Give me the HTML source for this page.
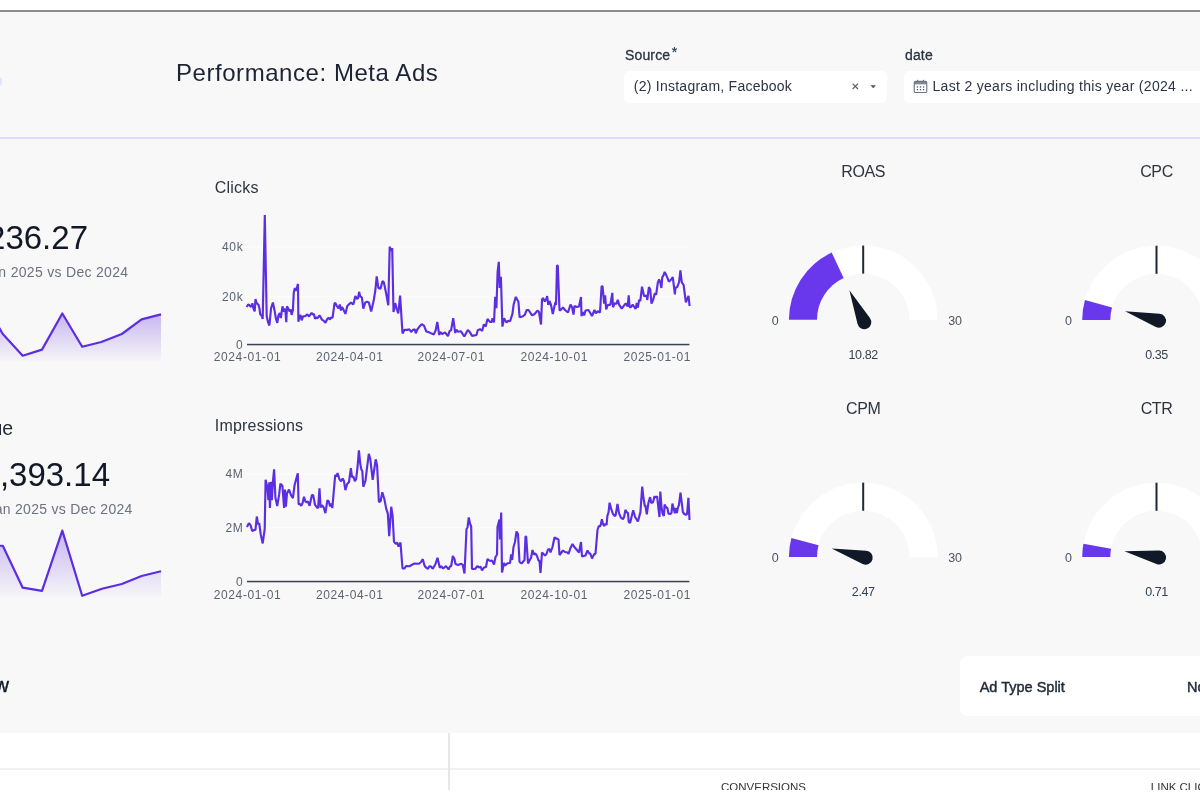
<!DOCTYPE html>
<html><head><meta charset="utf-8"><title>Performance: Meta Ads</title>
<style>
*{box-sizing:border-box;margin:0;padding:0}
html,body{width:1200px;height:800px;overflow:hidden;background:#ffffff;font-family:"Liberation Sans",sans-serif}
.topbar{position:absolute;left:0;top:10px;width:1200px;height:1.6px;background:#8b8d8d}
.page{position:absolute;left:0;top:11.6px;width:1200px;height:721.7px;background:#f8f8f8}
.hdrline{position:absolute;left:0;top:137.2px;width:1200px;height:1.5px;background:#e0dbfb}
.root{position:absolute;left:0;top:0;width:1200px;height:800px;overflow:hidden;will-change:transform}
.abs{position:absolute;white-space:nowrap}
.title{left:176px;font-size:24px;line-height:24px;color:#1c2434;letter-spacing:0.55px}
.flabel{font-size:14px;line-height:14px;color:#2b3344;-webkit-text-stroke:0.3px #2b3344;letter-spacing:0.15px}
.input{position:absolute;background:#fff;border-radius:5px;height:31.3px;top:71.3px}
.itext{font-size:14px;line-height:14px;color:#2b3344;letter-spacing:0.25px}
.logo{position:absolute;left:-6px;top:77px;width:8px;height:9px;border-radius:4px;background:#d9e6fb}
.kpi-val{font-size:33px;line-height:33px;color:#111827}
.kpi-sub{font-size:14px;line-height:14px;color:#6b7280;letter-spacing:0.3px}
.kpi-lab{font-size:19.5px;line-height:20px;color:#1f2937}
.ctitle{font-size:16px;line-height:16px;color:#2e3440;letter-spacing:0.2px}
svg{position:absolute;left:0;top:0}
svg text{font-family:"Liberation Sans",sans-serif}
.ax{font-size:12px;fill:#5c6370;letter-spacing:0.62px}
.gt{font-size:16px;fill:#2e3440;letter-spacing:-0.4px}
.gl{font-size:12.5px;fill:#4b5563}
.gv{font-size:12.5px;fill:#374151;letter-spacing:-0.4px}
.bottom{position:absolute;left:0;top:733.3px;width:1200px;height:56.4px;background:#fff;overflow:hidden}
.hline{position:absolute;left:0;top:35px;width:1200px;height:1.6px;background:#f1f1f1}
.vline{position:absolute;left:448px;top:0;width:2px;height:56.4px;background:#e5e7eb}
.th{font-size:11.5px;line-height:12px;color:#333;letter-spacing:0px}
.card{position:absolute;left:960px;top:656.3px;width:260px;height:60px;background:#fff;border-radius:8px}
.cardt{font-size:14.5px;line-height:15px;color:#1f2937;-webkit-text-stroke:0.45px #1f2937}
.sect{font-size:20px;line-height:20px;color:#111827;-webkit-text-stroke:0.4px #111827}
</style></head><body>
<div class="root">
<div class="topbar"></div>
<div class="page"></div>
<div class="hdrline"></div>
<div class="logo"></div>
<div class="abs title" style="top:60.5px">Performance: Meta Ads</div>
<div class="abs flabel" style="left:625px;top:47.9px">Source<span style="font-size:14px;position:relative;top:-3px;margin-left:1.5px;-webkit-text-stroke:0.2px #2b3344">*</span></div>
<div class="input" style="left:624px;width:263px">
  <div class="abs itext" style="left:9.8px;top:7.7px">(2) Instagram, Facebook</div>
  <svg width="8" height="8" style="left:227.6px;top:12.2px" viewBox="0 0 8 8"><path d="M0.6,0.6 L6.0,6.0 M6.0,0.6 L0.6,6.0" stroke="#525a66" stroke-width="1.1" fill="none"/></svg>
  <svg width="8" height="5" style="left:245.9px;top:13.6px" viewBox="0 0 8 5"><path d="M0.4,0.2 L6.0,0.2 L3.2,3.2 Z" fill="#4b5563"/></svg>
</div>
<div class="abs flabel" style="left:905px;top:47.9px">date</div>
<div class="input" style="left:904px;width:320px">
  <svg width="16" height="16" style="left:9px;top:8px" viewBox="0 0 16 16"><rect x="1.25" y="2.35" width="12.5" height="11.2" rx="1.4" fill="none" stroke="#6b7280" stroke-width="1.1"/><rect x="1.25" y="2.35" width="12.5" height="3" fill="#6b7280" opacity="0.85"/><rect x="4.1" y="0.8" width="1.1" height="2.2" fill="#6b7280"/><rect x="9.9" y="0.8" width="1.1" height="2.2" fill="#6b7280"/><g fill="#4b5563"><rect x="3.8" y="7.3" width="1.3" height="1.3"/><rect x="6.85" y="7.3" width="1.3" height="1.3"/><rect x="9.9" y="7.3" width="1.3" height="1.3"/><rect x="3.8" y="10" width="1.3" height="1.3"/><rect x="6.85" y="10" width="1.3" height="1.3"/><rect x="9.9" y="10" width="1.3" height="1.3"/></g></svg>
  <div class="abs itext" style="left:28.5px;top:7.7px;letter-spacing:0.31px">Last 2 years including this year (2024 ...</div>
</div>
<!-- KPI text -->
<div class="abs kpi-val" style="right:1112px;top:221.2px">$1,236.27</div>
<div class="abs kpi-sub" style="right:1071.7px;top:264.5px">Jan 2025 vs Dec 2024</div>
<div class="abs kpi-lab" style="right:1186.9px;top:418px">Revenue</div>
<div class="abs kpi-val" style="right:1090px;top:457.8px">$13,393.14</div>
<div class="abs kpi-sub" style="right:1067.3px;top:502.3px">Jan 2025 vs Dec 2024</div>
<div class="abs ctitle" style="left:214.8px;top:179.5px">Clicks</div>
<div class="abs ctitle" style="left:214.8px;top:417.5px">Impressions</div>
<svg width="1200" height="800" viewBox="0 0 1200 800">
<defs>
<linearGradient id="sg1" x1="0" y1="313" x2="0" y2="361" gradientUnits="userSpaceOnUse"><stop offset="0" stop-color="#c7b5f0"/><stop offset="1" stop-color="#c7b5f0" stop-opacity="0.05"/></linearGradient>
<linearGradient id="sg2" x1="0" y1="530" x2="0" y2="597" gradientUnits="userSpaceOnUse"><stop offset="0" stop-color="#c7b5f0"/><stop offset="1" stop-color="#c7b5f0" stop-opacity="0.05"/></linearGradient>
</defs>
<path d="M-17.1,300.0 L2.8,334.0 L22.7,355.7 L42.0,349.6 L62.3,313.5 L82.2,346.7 L101.3,342.0 L121.8,334.0 L141.6,319.4 L161.0,314.4 L161.0,361 L-17.1,361 Z" fill="url(#sg1)"/><path d="M-17.1,300.0 L2.8,334.0 L22.7,355.7 L42.0,349.6 L62.3,313.5 L82.2,346.7 L101.3,342.0 L121.8,334.0 L141.6,319.4 L161.0,314.4" fill="none" stroke="#5b2ee2" stroke-width="2.2" stroke-linejoin="round"/>
<path d="M-17.1,545.5 L2.8,545.8 L22.7,587.7 L42.0,590.8 L62.3,530.6 L82.2,595.8 L102.0,588.7 L121.8,584.0 L141.6,576.0 L161.0,571.3 L161.0,597 L-17.1,597 Z" fill="url(#sg2)"/><path d="M-17.1,545.5 L2.8,545.8 L22.7,587.7 L42.0,590.8 L62.3,530.6 L82.2,595.8 L102.0,588.7 L121.8,584.0 L141.6,576.0 L161.0,571.3" fill="none" stroke="#5b2ee2" stroke-width="2.2" stroke-linejoin="round"/>
<g class="grid"><rect x="247" y="246.2" width="442.4" height="1" fill="#fdfdfd"/><rect x="247" y="296.2" width="442.4" height="1" fill="#fdfdfd"/></g>
<rect x="247" y="343.8" width="442.4" height="1.5" fill="#374151"/>
<path d="M246.7,307.0 L248.1,304.6 L249.2,304.9 L250.5,306.6 L251.6,306.3 L252.4,303.2 L253.3,308.0 L254.7,311.4 L255.5,299.1 L256.4,302.5 L257.4,303.9 L258.4,304.6 L259.5,308.7 L260.2,314.2 L261.5,315.5 L262.7,319.0 L264.8,214.9 L266.7,316.2 L268.1,322.4 L269.4,325.5 L271.1,308.0 L272.9,302.5 L274.6,310.7 L276.0,319.0 L277.3,322.8 L278.4,315.5 L279.7,313.1 L280.8,318.0 L282.5,306.3 L283.7,311.4 L285.2,308.7 L286.3,322.1 L287.0,306.3 L288.7,309.4 L289.7,311.4 L290.7,309.4 L291.6,314.9 L292.9,310.1 L293.8,292.2 L294.9,288.1 L295.7,290.8 L296.8,288.1 L298.0,283.9 L298.4,321.7 L299.5,315.5 L300.7,315.5 L301.6,320.4 L303.2,316.2 L305.3,316.1 L307.4,314.3 L309.0,316.5 L311.6,312.8 L312.8,314.6 L313.9,313.9 L315.0,318.8 L316.1,317.3 L317.3,318.4 L319.5,315.4 L322.1,319.9 L323.6,320.6 L325.4,322.9 L327.0,319.5 L328.5,317.6 L330.0,319.5 L330.8,317.6 L332.6,317.6 L334.5,303.4 L335.3,303.0 L336.8,306.0 L338.4,308.3 L339.8,304.5 L340.9,310.5 L341.6,307.1 L342.8,308.3 L345.4,313.9 L347.3,306.0 L349.5,303.8 L351.0,302.6 L353.3,304.5 L355.4,295.9 L357.0,298.9 L358.1,298.1 L359.1,291.8 L360.2,296.2 L361.9,297.6 L363.3,308.6 L365.3,302.4 L367.1,301.7 L368.8,302.4 L371.2,311.4 L373.6,301.1 L375.4,290.0 L376.7,276.3 L378.4,288.0 L380.5,288.7 L382.5,281.1 L383.9,282.5 L386.0,292.8 L388.3,305.2 L389.7,246.7 L391.1,250.8 L392.2,248.1 L393.5,312.1 L395.2,303.1 L396.6,308.6 L398.3,313.4 L400.1,295.5 L402.5,333.4 L404.5,329.9 L407.3,329.9 L409.4,329.3 L411.1,332.0 L412.9,330.0 L414.7,329.2 L415.8,333.3 L417.3,329.5 L419.3,326.8 L421.7,324.2 L424.0,325.7 L426.3,331.5 L428.7,332.1 L431.0,333.3 L433.9,334.4 L435.7,330.3 L437.3,321.9 L439.2,335.0 L440.3,331.8 L442.1,334.1 L445.0,332.4 L447.9,336.2 L449.7,330.9 L451.1,330.3 L453.2,318.1 L455.2,333.0 L456.4,329.5 L457.8,331.8 L460.8,331.2 L464.3,336.5 L467.8,330.0 L469.8,332.1 L472.1,335.9 L476.5,335.0 L477.7,330.3 L480.0,329.2 L482.2,330.8 L483.9,324.3 L485.7,326.6 L487.5,318.9 L489.9,321.9 L491.7,321.9 L492.5,318.3 L494.0,322.5 L495.2,296.9 L496.4,308.2 L497.6,272.0 L498.8,261.9 L499.7,288.0 L500.9,276.7 L502.4,326.6 L504.1,318.3 L506.5,322.5 L508.3,320.7 L510.1,321.3 L512.5,313.6 L513.6,304.7 L515.8,296.9 L518.4,301.7 L519.6,317.1 L522.6,316.5 L524.9,314.7 L526.7,310.0 L528.5,310.0 L532.1,315.3 L534.4,314.2 L537.4,310.6 L539.0,312.0 L541.0,324.5 L542.0,299.5 L543.0,298.0 L544.8,301.5 L546.0,299.5 L547.2,296.0 L548.2,305.0 L549.5,301.0 L551.0,305.0 L552.8,314.0 L554.5,306.0 L555.5,302.0 L556.0,305.0 L557.0,265.5 L557.8,265.5 L559.5,310.5 L561.0,309.5 L563.0,307.5 L565.0,310.0 L568.0,312.5 L570.5,304.5 L572.0,307.0 L573.5,314.5 L574.5,306.0 L577.0,307.0 L579.0,306.5 L581.0,297.0 L581.5,316.0 L583.0,312.0 L584.2,315.5 L585.5,310.5 L588.5,310.0 L592.0,316.0 L594.5,310.0 L595.9,313.4 L597.7,311.2 L600.0,312.5 L601.6,286.2 L602.5,286.2 L604.2,303.7 L605.1,295.4 L606.2,309.4 L607.6,305.1 L610.4,304.6 L612.3,292.8 L613.0,307.2 L614.7,303.3 L616.5,303.7 L617.8,299.8 L619.1,304.6 L621.7,308.6 L625.7,303.3 L627.7,306.4 L628.7,295.4 L629.6,307.2 L630.9,307.2 L632.7,304.6 L635.6,309.0 L636.8,302.9 L637.9,307.7 L639.1,299.8 L640.3,301.1 L642.0,286.7 L644.1,296.3 L646.7,295.4 L647.3,300.2 L648.9,287.1 L650.2,289.3 L651.5,303.7 L653.3,299.3 L654.8,293.3 L656.1,294.8 L657.8,282.8 L659.1,279.4 L660.4,282.8 L661.4,288.0 L662.3,277.1 L663.4,275.6 L664.7,271.9 L666.8,276.4 L668.9,281.6 L670.9,279.8 L672.8,277.1 L674.9,294.4 L675.4,288.0 L677.3,286.9 L679.1,282.0 L680.4,270.4 L681.8,282.4 L683.6,285.0 L685.9,302.3 L688.5,295.9 L689.6,306.0" fill="none" stroke="#5b2ee2" stroke-width="2.15" stroke-linejoin="bevel"/>
<text x="243.3" y="251.2" class="ax" text-anchor="end">40k</text>
<text x="243.3" y="301.2" class="ax" text-anchor="end">20k</text>
<text x="243.3" y="348.7" class="ax" text-anchor="end">0</text>
<text x="247.5" y="361.4" class="ax" text-anchor="middle">2024-01-01</text>
<text x="349.7" y="361.4" class="ax" text-anchor="middle">2024-04-01</text>
<text x="451.3" y="361.4" class="ax" text-anchor="middle">2024-07-01</text>
<text x="554.2" y="361.4" class="ax" text-anchor="middle">2024-10-01</text>
<text x="657.2" y="361.4" class="ax" text-anchor="middle">2025-01-01</text>
<g class="grid"><rect x="247" y="473.7" width="442.4" height="1" fill="#fdfdfd"/><rect x="247" y="527.2" width="442.4" height="1" fill="#fdfdfd"/></g>
<rect x="247" y="580.8" width="442.4" height="1.5" fill="#374151"/>
<path d="M247.0,527.0 L248.9,523.1 L250.5,525.0 L252.2,531.0 L254.2,530.0 L255.5,529.6 L256.8,516.5 L258.1,524.4 L259.2,523.1 L260.7,534.2 L262.7,543.4 L264.7,529.0 L265.6,479.8 L267.3,487.0 L268.4,500.1 L269.3,482.4 L269.9,508.0 L271.0,481.7 L271.9,500.1 L272.8,483.1 L274.1,469.3 L275.4,497.5 L277.2,506.0 L279.1,494.9 L280.4,483.7 L282.4,485.7 L284.1,508.0 L285.0,489.6 L285.9,506.7 L287.0,493.6 L289.0,489.6 L290.9,494.9 L292.9,498.1 L294.6,485.0 L296.2,479.1 L297.8,473.2 L298.6,504.1 L300.1,504.1 L301.2,505.8 L302.6,503.0 L304.0,496.8 L305.3,501.3 L306.8,502.4 L307.9,501.3 L309.6,505.8 L311.9,495.1 L313.2,495.1 L315.0,504.7 L316.9,507.5 L318.1,508.1 L319.5,488.4 L320.6,507.5 L322.0,505.2 L323.7,507.5 L325.4,513.1 L327.4,500.2 L328.7,501.3 L330.1,506.4 L331.2,503.6 L332.3,508.1 L335.2,475.1 L336.6,476.5 L337.6,473.0 L339.4,479.2 L341.0,481.3 L342.7,478.5 L344.0,481.3 L345.4,490.2 L347.2,484.0 L349.0,482.0 L350.9,468.2 L352.0,477.2 L353.4,476.5 L354.8,481.3 L356.1,479.2 L357.5,467.5 L358.9,450.3 L360.3,464.1 L361.4,469.6 L362.3,471.0 L363.3,486.8 L365.5,480.6 L366.9,468.9 L368.8,453.8 L370.2,458.6 L372.7,479.9 L374.0,471.0 L375.7,459.3 L377.1,465.5 L378.9,501.9 L380.6,501.2 L382.3,492.3 L384.4,499.2 L386.1,508.1 L387.8,513.6 L389.2,536.3 L391.2,506.7 L392.6,515.7 L394.0,541.8 L395.8,543.9 L397.2,542.5 L398.5,546.6 L400.5,542.5 L401.2,552.0 L402.5,568.5 L404.5,568.5 L406.0,566.0 L409.5,566.2 L412.0,564.8 L414.5,563.5 L419.0,563.8 L421.0,562.0 L422.8,559.2 L424.5,565.5 L426.0,567.5 L427.8,568.8 L429.5,566.2 L431.0,566.5 L432.8,568.8 L435.5,564.0 L437.5,557.8 L439.8,567.8 L441.2,566.2 L443.2,568.5 L446.0,566.0 L448.5,569.5 L450.0,566.5 L451.2,566.0 L452.8,556.0 L454.5,559.0 L455.5,564.0 L458.0,565.0 L461.2,563.8 L462.8,564.8 L464.5,573.5 L466.5,529.0 L467.5,527.5 L468.8,517.5 L470.0,523.5 L471.2,526.5 L472.0,569.0 L475.0,569.0 L477.5,566.0 L479.0,567.5 L480.8,566.8 L482.0,570.5 L484.0,567.5 L486.0,567.0 L487.5,559.0 L490.0,561.0 L492.0,560.5 L494.0,564.5 L495.5,557.0 L497.0,554.5 L497.5,527.0 L499.5,519.5 L500.0,539.5 L501.2,512.5 L502.0,572.5 L504.0,563.0 L505.2,565.5 L507.5,563.2 L510.0,563.0 L511.2,554.5 L512.2,560.0 L513.5,547.0 L515.0,542.0 L516.5,531.5 L518.0,534.0 L519.5,562.0 L521.5,563.5 L524.5,560.0 L525.5,536.5 L526.2,536.5 L528.0,563.5 L530.0,559.5 L531.0,558.0 L532.5,550.0 L534.0,554.5 L535.5,553.5 L537.0,556.0 L538.5,560.5 L539.5,561.0 L540.5,573.0 L542.0,552.5 L545.0,555.5 L546.5,554.0 L548.0,549.5 L549.5,549.0 L550.5,552.5 L552.5,547.0 L554.5,537.5 L556.5,538.5 L558.5,539.5 L559.5,555.0 L563.0,550.5 L565.0,552.0 L567.5,552.5 L568.5,554.0 L570.5,548.0 L572.5,544.0 L574.0,546.5 L576.5,549.5 L579.0,552.5 L581.0,542.0 L582.0,556.5 L585.5,555.5 L587.5,550.5 L589.0,553.0 L590.5,554.0 L592.0,558.5 L594.0,554.5 L595.5,553.5 L597.5,530.0 L598.8,526.0 L600.0,526.5 L600.8,524.5 L601.9,519.2 L602.9,523.7 L604.1,526.0 L605.3,523.7 L606.6,524.9 L607.4,515.9 L608.5,512.5 L609.6,502.7 L611.1,508.7 L613.0,514.0 L614.6,515.9 L615.6,515.5 L617.5,503.9 L619.0,513.2 L620.9,517.7 L622.9,519.2 L624.1,517.0 L625.4,509.9 L626.9,512.5 L628.0,512.9 L628.7,521.9 L630.1,523.0 L631.7,516.2 L633.2,510.2 L635.1,517.0 L637.9,521.5 L640.4,512.1 L641.3,499.7 L642.2,486.6 L643.4,497.5 L644.9,506.5 L645.3,505.0 L646.8,514.4 L648.4,503.1 L650.1,497.1 L651.3,503.1 L653.1,502.0 L654.4,496.4 L655.8,497.5 L657.1,496.4 L658.4,508.0 L659.5,517.0 L660.3,491.5 L661.4,505.8 L662.4,512.9 L663.9,515.9 L664.6,504.6 L666.3,507.6 L667.4,508.0 L668.4,513.6 L670.4,514.0 L671.5,512.9 L672.4,503.5 L673.6,508.4 L674.9,513.3 L675.6,508.0 L676.8,512.9 L677.9,508.0 L679.0,504.6 L680.5,492.6 L681.6,501.6 L682.9,512.1 L684.3,514.0 L685.8,514.8 L687.1,514.0 L688.4,497.9 L689.5,520.0" fill="none" stroke="#5b2ee2" stroke-width="2.15" stroke-linejoin="bevel"/>
<text x="243.3" y="478" class="ax" text-anchor="end">4M</text>
<text x="243.3" y="532.3" class="ax" text-anchor="end">2M</text>
<text x="243.3" y="585.7" class="ax" text-anchor="end">0</text>
<text x="247.5" y="598.5" class="ax" text-anchor="middle">2024-01-01</text>
<text x="349.7" y="598.5" class="ax" text-anchor="middle">2024-04-01</text>
<text x="451.3" y="598.5" class="ax" text-anchor="middle">2024-07-01</text>
<text x="554.2" y="598.5" class="ax" text-anchor="middle">2024-10-01</text>
<text x="657.2" y="598.5" class="ax" text-anchor="middle">2025-01-01</text>
<path d="M788.90,319.85 A74.3,74.3 0 0 1 937.50,319.85 L909.40,319.85 A46.2,46.2 0 0 0 817.00,319.85 Z" fill="#ffffff"/>
<path d="M788.90,319.85 A74.3,74.3 0 0 1 831.71,252.56 L843.62,278.01 A46.2,46.2 0 0 0 817.00,319.85 Z" fill="#6a38ec"/>
<rect x="862.20" y="245.55" width="2" height="28.10" fill="#1f2937"/>
<path d="M849.38,290.32 L869.93,318.04 A7.0,7.0 0 1 1 857.50,323.85 Z" fill="#111827"/>
<text x="863.2" y="176.8" class="gt" text-anchor="middle">ROAS</text>
<text x="775.2" y="324.8" class="gl" text-anchor="middle">0</text>
<text x="955.1" y="324.8" class="gl" text-anchor="middle">30</text>
<text x="863.2" y="359.2" class="gv" text-anchor="middle">10.82</text>
<path d="M1082.20,320.00 A74.3,74.3 0 0 1 1230.80,320.00 L1202.70,320.00 A46.2,46.2 0 0 0 1110.30,320.00 Z" fill="#ffffff"/>
<path d="M1082.20,320.00 A74.3,74.3 0 0 1 1084.94,300.01 L1112.00,307.57 A46.2,46.2 0 0 0 1110.30,320.00 Z" fill="#6a38ec"/>
<rect x="1155.50" y="245.70" width="2" height="28.10" fill="#1f2937"/>
<path d="M1125.10,311.23 L1159.51,313.72 A7.0,7.0 0 1 1 1155.82,326.93 Z" fill="#111827"/>
<text x="1156.5" y="176.8" class="gt" text-anchor="middle">CPC</text>
<text x="1068.5" y="324.9" class="gl" text-anchor="middle">0</text>
<text x="1156.5" y="359.2" class="gv" text-anchor="middle">0.35</text>
<path d="M788.90,556.95 A74.3,74.3 0 0 1 937.50,556.95 L909.40,556.95 A46.2,46.2 0 0 0 817.00,556.95 Z" fill="#ffffff"/>
<path d="M788.90,556.95 A74.3,74.3 0 0 1 791.37,537.95 L818.54,545.13 A46.2,46.2 0 0 0 817.00,556.95 Z" fill="#6a38ec"/>
<rect x="862.20" y="482.65" width="2" height="28.10" fill="#1f2937"/>
<path d="M831.68,548.61 L866.12,550.63 A7.0,7.0 0 1 1 862.61,563.89 Z" fill="#111827"/>
<text x="863.2" y="414.4" class="gt" text-anchor="middle">CPM</text>
<text x="775.2" y="561.9" class="gl" text-anchor="middle">0</text>
<text x="955.1" y="561.9" class="gl" text-anchor="middle">30</text>
<text x="863.2" y="595.5" class="gv" text-anchor="middle">2.47</text>
<path d="M1082.20,557.00 A74.3,74.3 0 0 1 1230.80,557.00 L1202.70,557.00 A46.2,46.2 0 0 0 1110.30,557.00 Z" fill="#ffffff"/>
<path d="M1082.20,557.00 A74.3,74.3 0 0 1 1083.41,543.65 L1111.05,548.70 A46.2,46.2 0 0 0 1110.30,557.00 Z" fill="#6a38ec"/>
<rect x="1155.50" y="482.70" width="2" height="28.10" fill="#1f2937"/>
<path d="M1124.43,551.14 L1158.92,550.47 A7.0,7.0 0 1 1 1156.46,563.97 Z" fill="#111827"/>
<text x="1156.5" y="414.4" class="gt" text-anchor="middle">CTR</text>
<text x="1068.5" y="561.9" class="gl" text-anchor="middle">0</text>
<text x="1156.5" y="595.5" class="gv" text-anchor="middle">0.71</text>
</svg>
<div class="abs sect" style="right:1191px;top:675px">Overview</div>
<div class="card">
  <div class="abs cardt" style="left:19.7px;top:23.3px">Ad Type Split</div>
  <div class="abs cardt" style="left:227px;top:23.3px">Non-Video</div>
</div>
<div class="bottom">
  <div class="hline"></div>
  <div class="vline"></div>
  <div class="abs th" style="left:721px;top:47.6px">CONVERSIONS</div>
  <div class="abs th" style="left:1150.8px;top:47.6px">LINK CLICKS</div>
</div>
</div>
</body></html>
